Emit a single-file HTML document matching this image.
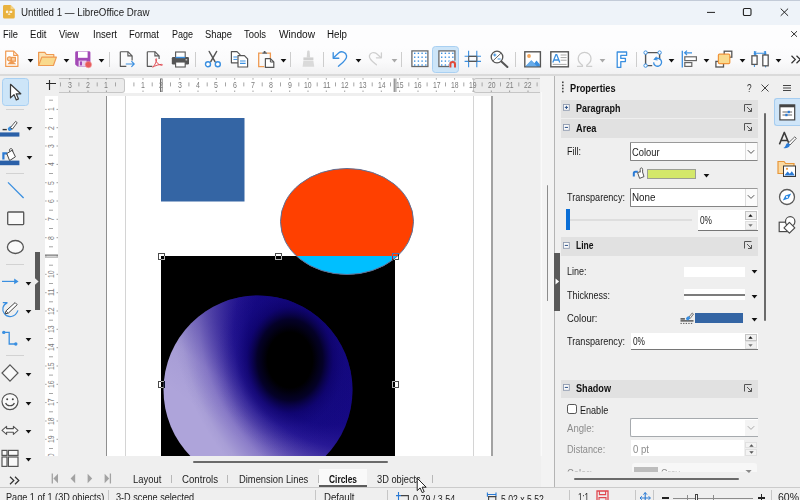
<!DOCTYPE html>
<html><head><meta charset="utf-8"><title>Untitled 1 - LibreOffice Draw</title>
<style>
html,body{margin:0;padding:0;}
body{width:800px;height:500px;overflow:hidden;position:relative;background:#efefef;font-family:"Liberation Sans",sans-serif;font-size:11px;color:#000;}
.b{position:absolute;display:block;}
.t{position:absolute;display:block;white-space:nowrap;line-height:normal;transform-origin:0 50%;}
</style></head><body>
<div class="b" style="left:0px;top:0px;width:800px;height:24.6px;background:#eef3f9;"></div>
<div class="b" style="left:0px;top:0px;width:800px;height:1px;background:#c3cbd8;"></div>
<svg class="b" style="left:3.2px;top:5.3px;" width="12" height="13.5" viewBox="0 0 12 13.5"><path d="M1.600 0h6l4.200 4.200v7.800a1.500 1.500 0 0 1-1.500 1.500h-8.800a1.500 1.500 0 0 1-1.500-1.500v-10.500a1.500 1.500 0 0 1 1.500-1.500z" fill="#e9b23e"/><path d="M7.600 0l4.200 4.200h-4.200z" fill="#f4d488"/><circle cx="4.100" cy="6.900" r="1.300" fill="#fdf3dc"/><rect x="6.500" y="5.800" width="2.700" height="2.200" rx="0.500" fill="#fdf3dc"/><path d="M4.600 9.200l1.500-.9 1.500.9-1.500.8z" fill="#fdf3dc"/></svg>
<span class="t" style="left:20.50px;top:7.00px;font-size:10px;color:#222;transform:scaleX(0.9726);">Untitled 1 — LibreOffice Draw</span>
<svg class="b" style="left:706px;top:6px;" width="12" height="12" viewBox="0 0 12 12"><path d="M1 6.400h8" stroke="#222" stroke-width="1" fill="none"/></svg>
<svg class="b" style="left:741px;top:6px;" width="12" height="12" viewBox="0 0 12 12"><rect x="2.400" y="2.500" width="7.600" height="7" rx="1.200" stroke="#222" stroke-width="1.100" fill="none"/></svg>
<svg class="b" style="left:777px;top:6px;" width="12" height="12" viewBox="0 0 12 12"><path d="M3.700 2.600l7.400 7.200M11.100 2.600L3.700 9.800" stroke="#222" stroke-width="1" fill="none"/></svg>
<div class="b" style="left:0px;top:24.6px;width:800px;height:21.4px;background:#fdfdfe;"></div>
<span class="t" style="left:3.00px;top:29.00px;font-size:10px;color:#111;transform:scaleX(0.9307);">File</span>
<span class="t" style="left:30.00px;top:29.00px;font-size:10px;color:#111;transform:scaleX(0.9574);">Edit</span>
<span class="t" style="left:59.00px;top:29.00px;font-size:10px;color:#111;transform:scaleX(0.9303);">View</span>
<span class="t" style="left:92.50px;top:29.00px;font-size:10px;color:#111;transform:scaleX(0.9595);">Insert</span>
<span class="t" style="left:129.00px;top:29.00px;font-size:10px;color:#111;transform:scaleX(0.9472);">Format</span>
<span class="t" style="left:171.50px;top:29.00px;font-size:10px;color:#111;transform:scaleX(0.8991);">Page</span>
<span class="t" style="left:204.50px;top:29.00px;font-size:10px;color:#111;transform:scaleX(0.9336);">Shape</span>
<span class="t" style="left:243.50px;top:29.00px;font-size:10px;color:#111;transform:scaleX(0.9422);">Tools</span>
<span class="t" style="left:278.50px;top:29.00px;font-size:10px;color:#111;transform:scaleX(1.0120);">Window</span>
<span class="t" style="left:327.00px;top:29.00px;font-size:10px;color:#111;transform:scaleX(0.9723);">Help</span>
<svg class="b" style="left:790px;top:30px;" width="9" height="9" viewBox="0 0 9 9"><path d="M1.200 1.200l5.800 5.600M7 1.200L1.200 6.800" stroke="#333" stroke-width="1" fill="none"/></svg>
<div class="b" style="left:0px;top:46px;width:800px;height:28px;background:#fbfbfc;"></div>
<div class="b" style="left:0px;top:74px;width:800px;height:2px;background:#e2e2e2;"></div>
<div class="b" style="left:0px;top:76px;width:36px;height:424px;background:#efefef;"></div>
<div class="b" style="left:0px;top:489px;width:800px;height:11px;background:#efefef;"></div>
<div class="b" style="left:59px;top:92px;width:481px;height:364px;background:#efefef;"></div>
<div class="b" style="left:106px;top:96px;width:386px;height:360px;background:#fff;"></div>
<div class="b" style="left:106.2px;top:96px;width:1.2px;height:360px;background:#8f8f8f;"></div>
<div class="b" style="left:491px;top:96px;width:2px;height:360px;background:#a2a2a2;"></div>
<div class="b" style="left:124.5px;top:96px;width:1.3px;height:360px;background:#d4d4d4;"></div>
<div class="b" style="left:472.7px;top:96px;width:1.3px;height:360px;background:#d4d4d4;"></div>
<svg class="b" style="left:0px;top:0px;clip-path:inset(92px 260px 0 59px);" width="800" height="456" viewBox="0 0 800 456"><defs><radialGradient id="sphl" gradientUnits="userSpaceOnUse" cx="420" cy="300" r="250" fx="289" fy="360"><stop offset="0" stop-color="#14087e"/><stop offset="0.34" stop-color="#170a86"/><stop offset="0.46" stop-color="#2a1a98"/><stop offset="0.61" stop-color="#5a4ab0"/><stop offset="0.76" stop-color="#8a7cc8"/><stop offset="0.93" stop-color="#a89ed6"/><stop offset="1" stop-color="#aea4da"/></radialGradient><linearGradient id="spht" gradientUnits="userSpaceOnUse" x1="185" y1="400" x2="262" y2="300"><stop offset="0" stop-color="#14087e" stop-opacity="0"/><stop offset="0.3" stop-color="#14087e" stop-opacity="0.05"/><stop offset="0.65" stop-color="#14087e" stop-opacity="0.3"/><stop offset="1" stop-color="#14087e" stop-opacity="0.45"/></linearGradient><radialGradient id="sphr" gradientUnits="userSpaceOnUse" cx="0" cy="0" r="88" gradientTransform="translate(290 360) scale(0.850 1.050)"><stop offset="0" stop-color="#000" stop-opacity="1"/><stop offset="0.3" stop-color="#000" stop-opacity="1"/><stop offset="0.44" stop-color="#02001c" stop-opacity="0.88"/><stop offset="0.58" stop-color="#0a0060" stop-opacity="0.52"/><stop offset="0.74" stop-color="#100878" stop-opacity="0.2"/><stop offset="0.9" stop-color="#100878" stop-opacity="0.04"/><stop offset="1" stop-color="#100878" stop-opacity="0"/></radialGradient><clipPath id="el"><ellipse cx="347" cy="221.5" rx="66.5" ry="53"/></clipPath></defs><rect x="108" y="96" width="383" height="360" fill="#fff"/><rect x="125" y="96" width="1" height="360" fill="#d4d4d4"/><rect x="473" y="96" width="1" height="360" fill="#d4d4d4"/><rect x="161" y="118" width="83.5" height="83.5" fill="#3465a4"/><rect x="161" y="256" width="234" height="210" fill="#000"/><ellipse cx="347" cy="221.5" rx="66.5" ry="53" fill="#ff4000"/><rect x="270" y="256" width="150" height="30" fill="#00bfff" clip-path="url(#el)"/><ellipse cx="347" cy="221.5" rx="66.5" ry="53" fill="none" stroke="#5d6f96" stroke-width="1"/><circle cx="258" cy="390" r="94.5" fill="url(#sphl)"/><circle cx="258" cy="390" r="94.5" fill="url(#spht)"/><circle cx="258" cy="390" r="94.5" fill="url(#sphr)"/><rect x="158.5" y="253.5" width="6" height="6" fill="none" stroke="#b4b4b4" stroke-width="1" style="mix-blend-mode:difference"/><rect x="275.5" y="253.5" width="6" height="6" fill="none" stroke="#b4b4b4" stroke-width="1" style="mix-blend-mode:difference"/><rect x="392.5" y="253.5" width="6" height="6" fill="none" stroke="#b4b4b4" stroke-width="1" style="mix-blend-mode:difference"/><rect x="158.5" y="381.5" width="6" height="6" fill="none" stroke="#b4b4b4" stroke-width="1" style="mix-blend-mode:difference"/><rect x="392.5" y="381.5" width="6" height="6" fill="none" stroke="#b4b4b4" stroke-width="1" style="mix-blend-mode:difference"/></svg>
<div class="b" style="left:36px;top:76px;width:519px;height:16px;background:#efefef;"></div>
<div class="b" style="left:59px;top:78px;width:481px;height:14.5px;background:#fff;"></div>
<div class="b" style="left:59px;top:78px;width:66px;height:14.5px;background:#ebebeb;border:1px solid #c6c6c6;border-left:none;border-radius:0 3px 3px 0;box-sizing:border-box;"></div>
<div class="b" style="left:473px;top:78px;width:67px;height:14.5px;background:#ebebeb;border:1px solid #c6c6c6;border-right:none;border-radius:3px 0 0 3px;box-sizing:border-box;"></div>
<svg class="b" style="left:0px;top:0px;" width="800" height="95" viewBox="0 0 800 95"><rect x="60.0" y="82.4" width="1" height="4" fill="#a6a6a6"/><rect x="69.2" y="78.3" width="1" height="1.2" fill="#8a8a8a"/><rect x="69.2" y="90.6" width="1" height="1.2" fill="#8a8a8a"/><rect x="78.4" y="82.4" width="1" height="4" fill="#a6a6a6"/><rect x="87.5" y="78.3" width="1" height="1.2" fill="#8a8a8a"/><rect x="87.5" y="90.6" width="1" height="1.2" fill="#8a8a8a"/><rect x="96.7" y="82.4" width="1" height="4" fill="#a6a6a6"/><rect x="105.9" y="78.3" width="1" height="1.2" fill="#8a8a8a"/><rect x="105.9" y="90.6" width="1" height="1.2" fill="#8a8a8a"/><rect x="115.0" y="82.4" width="1" height="4" fill="#a6a6a6"/><rect x="133.4" y="82.4" width="1" height="4" fill="#a6a6a6"/><rect x="142.5" y="78.3" width="1" height="1.2" fill="#8a8a8a"/><rect x="142.5" y="90.6" width="1" height="1.2" fill="#8a8a8a"/><rect x="151.7" y="82.4" width="1" height="4" fill="#a6a6a6"/><rect x="160.9" y="78.3" width="1" height="1.2" fill="#8a8a8a"/><rect x="160.9" y="90.6" width="1" height="1.2" fill="#8a8a8a"/><rect x="170.0" y="82.4" width="1" height="4" fill="#a6a6a6"/><rect x="179.2" y="78.3" width="1" height="1.2" fill="#8a8a8a"/><rect x="179.2" y="90.6" width="1" height="1.2" fill="#8a8a8a"/><rect x="188.4" y="82.4" width="1" height="4" fill="#a6a6a6"/><rect x="197.5" y="78.3" width="1" height="1.2" fill="#8a8a8a"/><rect x="197.5" y="90.6" width="1" height="1.2" fill="#8a8a8a"/><rect x="206.7" y="82.4" width="1" height="4" fill="#a6a6a6"/><rect x="215.8" y="78.3" width="1" height="1.2" fill="#8a8a8a"/><rect x="215.8" y="90.6" width="1" height="1.2" fill="#8a8a8a"/><rect x="225.0" y="82.4" width="1" height="4" fill="#a6a6a6"/><rect x="234.2" y="78.3" width="1" height="1.2" fill="#8a8a8a"/><rect x="234.2" y="90.6" width="1" height="1.2" fill="#8a8a8a"/><rect x="243.3" y="82.4" width="1" height="4" fill="#a6a6a6"/><rect x="252.5" y="78.3" width="1" height="1.2" fill="#8a8a8a"/><rect x="252.5" y="90.6" width="1" height="1.2" fill="#8a8a8a"/><rect x="261.7" y="82.4" width="1" height="4" fill="#a6a6a6"/><rect x="270.8" y="78.3" width="1" height="1.2" fill="#8a8a8a"/><rect x="270.8" y="90.6" width="1" height="1.2" fill="#8a8a8a"/><rect x="280.0" y="82.4" width="1" height="4" fill="#a6a6a6"/><rect x="289.2" y="78.3" width="1" height="1.2" fill="#8a8a8a"/><rect x="289.2" y="90.6" width="1" height="1.2" fill="#8a8a8a"/><rect x="298.3" y="82.4" width="1" height="4" fill="#a6a6a6"/><rect x="307.5" y="78.3" width="1" height="1.2" fill="#8a8a8a"/><rect x="307.5" y="90.6" width="1" height="1.2" fill="#8a8a8a"/><rect x="316.7" y="82.4" width="1" height="4" fill="#a6a6a6"/><rect x="325.8" y="78.3" width="1" height="1.2" fill="#8a8a8a"/><rect x="325.8" y="90.6" width="1" height="1.2" fill="#8a8a8a"/><rect x="335.0" y="82.4" width="1" height="4" fill="#a6a6a6"/><rect x="344.2" y="78.3" width="1" height="1.2" fill="#8a8a8a"/><rect x="344.2" y="90.6" width="1" height="1.2" fill="#8a8a8a"/><rect x="353.3" y="82.4" width="1" height="4" fill="#a6a6a6"/><rect x="362.5" y="78.3" width="1" height="1.2" fill="#8a8a8a"/><rect x="362.5" y="90.6" width="1" height="1.2" fill="#8a8a8a"/><rect x="371.7" y="82.4" width="1" height="4" fill="#a6a6a6"/><rect x="380.8" y="78.3" width="1" height="1.2" fill="#8a8a8a"/><rect x="380.8" y="90.6" width="1" height="1.2" fill="#8a8a8a"/><rect x="390.0" y="82.4" width="1" height="4" fill="#a6a6a6"/><rect x="399.1" y="78.3" width="1" height="1.2" fill="#8a8a8a"/><rect x="399.1" y="90.6" width="1" height="1.2" fill="#8a8a8a"/><rect x="408.3" y="82.4" width="1" height="4" fill="#a6a6a6"/><rect x="417.5" y="78.3" width="1" height="1.2" fill="#8a8a8a"/><rect x="417.5" y="90.6" width="1" height="1.2" fill="#8a8a8a"/><rect x="426.6" y="82.4" width="1" height="4" fill="#a6a6a6"/><rect x="435.8" y="78.3" width="1" height="1.2" fill="#8a8a8a"/><rect x="435.8" y="90.6" width="1" height="1.2" fill="#8a8a8a"/><rect x="445.0" y="82.4" width="1" height="4" fill="#a6a6a6"/><rect x="454.1" y="78.3" width="1" height="1.2" fill="#8a8a8a"/><rect x="454.1" y="90.6" width="1" height="1.2" fill="#8a8a8a"/><rect x="463.3" y="82.4" width="1" height="4" fill="#a6a6a6"/><rect x="472.5" y="78.3" width="1" height="1.2" fill="#8a8a8a"/><rect x="472.5" y="90.6" width="1" height="1.2" fill="#8a8a8a"/><rect x="481.6" y="82.4" width="1" height="4" fill="#a6a6a6"/><rect x="490.8" y="78.3" width="1" height="1.2" fill="#8a8a8a"/><rect x="490.8" y="90.6" width="1" height="1.2" fill="#8a8a8a"/><rect x="500.0" y="82.4" width="1" height="4" fill="#a6a6a6"/><rect x="509.1" y="78.3" width="1" height="1.2" fill="#8a8a8a"/><rect x="509.1" y="90.6" width="1" height="1.2" fill="#8a8a8a"/><rect x="518.3" y="82.4" width="1" height="4" fill="#a6a6a6"/><rect x="527.5" y="78.3" width="1" height="1.2" fill="#8a8a8a"/><rect x="527.5" y="90.6" width="1" height="1.2" fill="#8a8a8a"/><rect x="536.6" y="82.4" width="1" height="4" fill="#a6a6a6"/><rect x="160.0" y="78.500" width="1" height="13.500" fill="#6e6e6e"/><rect x="161.7" y="78.500" width="1" height="13.500" fill="#8a8a8a"/><rect x="393.7" y="78.500" width="1" height="13.500" fill="#6e6e6e"/><rect x="395.4" y="78.500" width="1" height="13.500" fill="#8a8a8a"/></svg>
<span class="t" style="left:67.76px;top:80.00px;font-size:9px;color:#7c7c7c;transform:scaleX(0.7791);">3</span>
<span class="t" style="left:86.09px;top:80.00px;font-size:9px;color:#7c7c7c;transform:scaleX(0.7791);">2</span>
<span class="t" style="left:104.42px;top:80.00px;font-size:9px;color:#7c7c7c;transform:scaleX(0.7791);">1</span>
<span class="t" style="left:141.08px;top:80.00px;font-size:9px;color:#7c7c7c;transform:scaleX(0.7791);">1</span>
<span class="t" style="left:159.41px;top:80.00px;font-size:9px;color:#7c7c7c;transform:scaleX(0.7791);">2</span>
<span class="t" style="left:177.74px;top:80.00px;font-size:9px;color:#7c7c7c;transform:scaleX(0.7791);">3</span>
<span class="t" style="left:196.07px;top:80.00px;font-size:9px;color:#7c7c7c;transform:scaleX(0.7791);">4</span>
<span class="t" style="left:214.40px;top:80.00px;font-size:9px;color:#7c7c7c;transform:scaleX(0.7791);">5</span>
<span class="t" style="left:232.73px;top:80.00px;font-size:9px;color:#7c7c7c;transform:scaleX(0.7791);">6</span>
<span class="t" style="left:251.06px;top:80.00px;font-size:9px;color:#7c7c7c;transform:scaleX(0.7791);">7</span>
<span class="t" style="left:269.39px;top:80.00px;font-size:9px;color:#7c7c7c;transform:scaleX(0.7791);">8</span>
<span class="t" style="left:287.72px;top:80.00px;font-size:9px;color:#7c7c7c;transform:scaleX(0.7791);">9</span>
<span class="t" style="left:304.20px;top:80.00px;font-size:9px;color:#7c7c7c;transform:scaleX(0.7591);">10</span>
<span class="t" style="left:322.53px;top:80.00px;font-size:9px;color:#7c7c7c;transform:scaleX(0.8134);">11</span>
<span class="t" style="left:340.86px;top:80.00px;font-size:9px;color:#7c7c7c;transform:scaleX(0.7591);">12</span>
<span class="t" style="left:359.19px;top:80.00px;font-size:9px;color:#7c7c7c;transform:scaleX(0.7591);">13</span>
<span class="t" style="left:377.52px;top:80.00px;font-size:9px;color:#7c7c7c;transform:scaleX(0.7591);">14</span>
<span class="t" style="left:395.85px;top:80.00px;font-size:9px;color:#7c7c7c;transform:scaleX(0.7591);">15</span>
<span class="t" style="left:414.18px;top:80.00px;font-size:9px;color:#7c7c7c;transform:scaleX(0.7591);">16</span>
<span class="t" style="left:432.51px;top:80.00px;font-size:9px;color:#7c7c7c;transform:scaleX(0.7591);">17</span>
<span class="t" style="left:450.84px;top:80.00px;font-size:9px;color:#7c7c7c;transform:scaleX(0.7591);">18</span>
<span class="t" style="left:469.17px;top:80.00px;font-size:9px;color:#7c7c7c;transform:scaleX(0.7591);">19</span>
<span class="t" style="left:487.50px;top:80.00px;font-size:9px;color:#7c7c7c;transform:scaleX(0.7591);">20</span>
<span class="t" style="left:505.83px;top:80.00px;font-size:9px;color:#7c7c7c;transform:scaleX(0.7591);">21</span>
<span class="t" style="left:524.16px;top:80.00px;font-size:9px;color:#7c7c7c;transform:scaleX(0.7591);">22</span>
<svg class="b" style="left:44px;top:78px;" width="14" height="14" viewBox="0 0 14 14"><path d="M5.500 2v10M2 5.500h10" stroke="#2a2a2a" stroke-width="1.150" fill="none"/></svg>
<div class="b" style="left:45px;top:96px;width:13px;height:360px;background:#fff;"></div>
<svg class="b" style="left:0px;top:0px;" width="60" height="456" viewBox="0 0 60 456"><rect x="49" y="99.7" width="4" height="1" fill="#a6a6a6"/><rect x="45.3" y="108.9" width="1.2" height="1" fill="#8a8a8a"/><rect x="56.600" y="108.9" width="1.200" height="1" fill="#8a8a8a"/><rect x="49" y="118.0" width="4" height="1" fill="#a6a6a6"/><rect x="45.3" y="127.2" width="1.2" height="1" fill="#8a8a8a"/><rect x="56.600" y="127.2" width="1.200" height="1" fill="#8a8a8a"/><rect x="49" y="136.4" width="4" height="1" fill="#a6a6a6"/><rect x="45.3" y="145.5" width="1.2" height="1" fill="#8a8a8a"/><rect x="56.600" y="145.5" width="1.200" height="1" fill="#8a8a8a"/><rect x="49" y="154.7" width="4" height="1" fill="#a6a6a6"/><rect x="45.3" y="163.9" width="1.2" height="1" fill="#8a8a8a"/><rect x="56.600" y="163.9" width="1.200" height="1" fill="#8a8a8a"/><rect x="49" y="173.0" width="4" height="1" fill="#a6a6a6"/><rect x="45.3" y="182.2" width="1.2" height="1" fill="#8a8a8a"/><rect x="56.600" y="182.2" width="1.200" height="1" fill="#8a8a8a"/><rect x="49" y="191.3" width="4" height="1" fill="#a6a6a6"/><rect x="45.3" y="200.5" width="1.2" height="1" fill="#8a8a8a"/><rect x="56.600" y="200.5" width="1.200" height="1" fill="#8a8a8a"/><rect x="49" y="209.7" width="4" height="1" fill="#a6a6a6"/><rect x="45.3" y="218.8" width="1.2" height="1" fill="#8a8a8a"/><rect x="56.600" y="218.8" width="1.200" height="1" fill="#8a8a8a"/><rect x="49" y="228.0" width="4" height="1" fill="#a6a6a6"/><rect x="45.3" y="237.2" width="1.2" height="1" fill="#8a8a8a"/><rect x="56.600" y="237.2" width="1.200" height="1" fill="#8a8a8a"/><rect x="49" y="246.3" width="4" height="1" fill="#a6a6a6"/><rect x="45.3" y="255.5" width="1.2" height="1" fill="#8a8a8a"/><rect x="56.600" y="255.5" width="1.200" height="1" fill="#8a8a8a"/><rect x="49" y="264.7" width="4" height="1" fill="#a6a6a6"/><rect x="45.3" y="273.8" width="1.2" height="1" fill="#8a8a8a"/><rect x="56.600" y="273.8" width="1.200" height="1" fill="#8a8a8a"/><rect x="49" y="283.0" width="4" height="1" fill="#a6a6a6"/><rect x="45.3" y="292.2" width="1.2" height="1" fill="#8a8a8a"/><rect x="56.600" y="292.2" width="1.200" height="1" fill="#8a8a8a"/><rect x="49" y="301.3" width="4" height="1" fill="#a6a6a6"/><rect x="45.3" y="310.5" width="1.2" height="1" fill="#8a8a8a"/><rect x="56.600" y="310.5" width="1.200" height="1" fill="#8a8a8a"/><rect x="49" y="319.7" width="4" height="1" fill="#a6a6a6"/><rect x="45.3" y="328.8" width="1.2" height="1" fill="#8a8a8a"/><rect x="56.600" y="328.8" width="1.200" height="1" fill="#8a8a8a"/><rect x="49" y="338.0" width="4" height="1" fill="#a6a6a6"/><rect x="45.3" y="347.2" width="1.2" height="1" fill="#8a8a8a"/><rect x="56.600" y="347.2" width="1.200" height="1" fill="#8a8a8a"/><rect x="49" y="356.3" width="4" height="1" fill="#a6a6a6"/><rect x="45.3" y="365.5" width="1.2" height="1" fill="#8a8a8a"/><rect x="56.600" y="365.5" width="1.200" height="1" fill="#8a8a8a"/><rect x="49" y="374.6" width="4" height="1" fill="#a6a6a6"/><rect x="45.3" y="383.8" width="1.2" height="1" fill="#8a8a8a"/><rect x="56.600" y="383.8" width="1.200" height="1" fill="#8a8a8a"/><rect x="49" y="393.0" width="4" height="1" fill="#a6a6a6"/><rect x="45.3" y="402.1" width="1.2" height="1" fill="#8a8a8a"/><rect x="56.600" y="402.1" width="1.200" height="1" fill="#8a8a8a"/><rect x="49" y="411.3" width="4" height="1" fill="#a6a6a6"/><rect x="45.3" y="420.5" width="1.2" height="1" fill="#8a8a8a"/><rect x="56.600" y="420.5" width="1.200" height="1" fill="#8a8a8a"/><rect x="49" y="429.6" width="4" height="1" fill="#a6a6a6"/><rect x="45.3" y="438.8" width="1.2" height="1" fill="#8a8a8a"/><rect x="56.600" y="438.8" width="1.200" height="1" fill="#8a8a8a"/><rect x="49" y="448.0" width="4" height="1" fill="#a6a6a6"/><rect x="45" y="254.6" width="13" height="1" fill="#555"/><rect x="45" y="256.6" width="13" height="1" fill="#999"/></svg>
<span class="t" style="left:45.50px;top:111.26px;font-size:9px;color:#7c7c7c;transform-origin:0 0;transform:rotate(-90deg) scaleX(0.759);">1</span>
<span class="t" style="left:45.50px;top:129.59px;font-size:9px;color:#7c7c7c;transform-origin:0 0;transform:rotate(-90deg) scaleX(0.759);">2</span>
<span class="t" style="left:45.50px;top:147.92px;font-size:9px;color:#7c7c7c;transform-origin:0 0;transform:rotate(-90deg) scaleX(0.759);">3</span>
<span class="t" style="left:45.50px;top:166.25px;font-size:9px;color:#7c7c7c;transform-origin:0 0;transform:rotate(-90deg) scaleX(0.759);">4</span>
<span class="t" style="left:45.50px;top:184.58px;font-size:9px;color:#7c7c7c;transform-origin:0 0;transform:rotate(-90deg) scaleX(0.759);">5</span>
<span class="t" style="left:45.50px;top:202.91px;font-size:9px;color:#7c7c7c;transform-origin:0 0;transform:rotate(-90deg) scaleX(0.759);">6</span>
<span class="t" style="left:45.50px;top:221.24px;font-size:9px;color:#7c7c7c;transform-origin:0 0;transform:rotate(-90deg) scaleX(0.759);">7</span>
<span class="t" style="left:45.50px;top:239.57px;font-size:9px;color:#7c7c7c;transform-origin:0 0;transform:rotate(-90deg) scaleX(0.759);">8</span>
<span class="t" style="left:45.50px;top:278.13px;font-size:9px;color:#7c7c7c;transform-origin:0 0;transform:rotate(-90deg) scaleX(0.759);">10</span>
<span class="t" style="left:45.50px;top:296.46px;font-size:9px;color:#7c7c7c;transform-origin:0 0;transform:rotate(-90deg) scaleX(0.813);">11</span>
<span class="t" style="left:45.50px;top:314.79px;font-size:9px;color:#7c7c7c;transform-origin:0 0;transform:rotate(-90deg) scaleX(0.759);">12</span>
<span class="t" style="left:45.50px;top:333.12px;font-size:9px;color:#7c7c7c;transform-origin:0 0;transform:rotate(-90deg) scaleX(0.759);">13</span>
<span class="t" style="left:45.50px;top:351.45px;font-size:9px;color:#7c7c7c;transform-origin:0 0;transform:rotate(-90deg) scaleX(0.759);">14</span>
<span class="t" style="left:45.50px;top:369.78px;font-size:9px;color:#7c7c7c;transform-origin:0 0;transform:rotate(-90deg) scaleX(0.759);">15</span>
<span class="t" style="left:45.50px;top:388.11px;font-size:9px;color:#7c7c7c;transform-origin:0 0;transform:rotate(-90deg) scaleX(0.759);">16</span>
<span class="t" style="left:45.50px;top:406.44px;font-size:9px;color:#7c7c7c;transform-origin:0 0;transform:rotate(-90deg) scaleX(0.759);">17</span>
<span class="t" style="left:45.50px;top:424.77px;font-size:9px;color:#7c7c7c;transform-origin:0 0;transform:rotate(-90deg) scaleX(0.759);">18</span>
<span class="t" style="left:45.50px;top:443.10px;font-size:9px;color:#7c7c7c;transform-origin:0 0;transform:rotate(-90deg) scaleX(0.759);">19</span>
<span class="t" style="left:45.50px;top:461.43px;font-size:9px;color:#7c7c7c;transform-origin:0 0;transform:rotate(-90deg) scaleX(0.759);">20</span>
<div class="b" style="left:540px;top:76px;width:15px;height:412px;background:#f3f3f3;"></div>
<div class="b" style="left:540.5px;top:92px;width:1px;height:364px;background:#fafafa;"></div>
<div class="b" style="left:546.6px;top:185px;width:1.8px;height:115.5px;background:#8c8c8c;border-radius:1px;"></div>
<div class="b" style="left:554.3px;top:76px;width:1.2px;height:412px;background:#b4b4b4;"></div>
<div class="b" style="left:556px;top:76px;width:244px;height:412px;background:#efefef;"></div>
<svg class="b" style="left:561px;top:81px;" width="4" height="12" viewBox="0 0 4 12"><g fill="#444"><rect x="1" y="0.5" width="1.6" height="1.6"/><rect x="1" y="3.6" width="1.6" height="1.6"/><rect x="1" y="6.7" width="1.6" height="1.6"/><rect x="1" y="9.8" width="1.6" height="1.6"/></g></svg>
<span class="t" style="left:569.70px;top:83.00px;font-size:10px;font-weight:bold;color:#111;transform:scaleX(0.9197);">Properties</span>
<span class="t" style="left:746.90px;top:83.00px;font-size:10px;color:#333;transform:scaleX(0.8270);">?</span>
<svg class="b" style="left:760px;top:83px;" width="10" height="10" viewBox="0 0 10 10"><path d="M1.5 1.5l7 7M8.5 1.5l-7 7" stroke="#444" stroke-width="1" fill="none"/></svg>
<svg class="b" style="left:782px;top:83px;" width="10" height="10" viewBox="0 0 10 10"><path d="M1 2.5h8M1 5h8M1 7.5h8" stroke="#444" stroke-width="1" fill="none"/></svg>
<div class="b" style="left:561px;top:99.5px;width:197px;height:18.5px;background:#e1e1e1;"></div>
<svg class="b" style="left:563.2px;top:104.1px;" width="7" height="7" viewBox="0 0 7 7"><rect x="0.5" y="0.5" width="5.800" height="5.800" fill="#fbfbfb" stroke="#8f9bb0" stroke-width="0.900"/><path d="M1.800 3.400h3.200" stroke="#2a4f86" stroke-width="1"/><path d="M3.400 1.800v3.200" stroke="#2a4f86" stroke-width="1"/></svg>
<span class="t" style="left:575.60px;top:103.00px;font-size:10px;font-weight:bold;color:#111;transform:scaleX(0.8995);">Paragraph</span>
<svg class="b" style="left:744px;top:103.5px;" width="9" height="9" viewBox="0 0 9 9"><path d="M0.5 7.5v-7h7" stroke="#555" stroke-width="1" fill="none"/><path d="M3 3l4.5 4.5M7.5 4v3.5h-3.5" stroke="#555" stroke-width="1" fill="none"/></svg>
<div class="b" style="left:561px;top:119.3px;width:197px;height:18.5px;background:#e1e1e1;"></div>
<svg class="b" style="left:563.2px;top:123.9px;" width="7" height="7" viewBox="0 0 7 7"><rect x="0.5" y="0.5" width="5.800" height="5.800" fill="#fbfbfb" stroke="#8f9bb0" stroke-width="0.900"/><path d="M1.800 3.400h3.200" stroke="#2a4f86" stroke-width="1"/></svg>
<span class="t" style="left:575.60px;top:123.00px;font-size:10px;font-weight:bold;color:#111;transform:scaleX(0.9218);">Area</span>
<svg class="b" style="left:744px;top:123.3px;" width="9" height="9" viewBox="0 0 9 9"><path d="M0.5 7.5v-7h7" stroke="#555" stroke-width="1" fill="none"/><path d="M3 3l4.5 4.5M7.5 4v3.5h-3.5" stroke="#555" stroke-width="1" fill="none"/></svg>
<div class="b" style="left:561px;top:237px;width:197px;height:18.5px;background:#e1e1e1;"></div>
<svg class="b" style="left:563.2px;top:241.6px;" width="7" height="7" viewBox="0 0 7 7"><rect x="0.5" y="0.5" width="5.800" height="5.800" fill="#fbfbfb" stroke="#8f9bb0" stroke-width="0.900"/><path d="M1.800 3.400h3.200" stroke="#2a4f86" stroke-width="1"/></svg>
<span class="t" style="left:575.60px;top:240.00px;font-size:10px;font-weight:bold;color:#111;transform:scaleX(0.8511);">Line</span>
<svg class="b" style="left:744px;top:241px;" width="9" height="9" viewBox="0 0 9 9"><path d="M0.5 7.5v-7h7" stroke="#555" stroke-width="1" fill="none"/><path d="M3 3l4.5 4.5M7.5 4v3.5h-3.5" stroke="#555" stroke-width="1" fill="none"/></svg>
<div class="b" style="left:561px;top:379.7px;width:197px;height:18.5px;background:#e1e1e1;"></div>
<svg class="b" style="left:563.2px;top:384.3px;" width="7" height="7" viewBox="0 0 7 7"><rect x="0.5" y="0.5" width="5.800" height="5.800" fill="#fbfbfb" stroke="#8f9bb0" stroke-width="0.900"/><path d="M1.800 3.400h3.200" stroke="#2a4f86" stroke-width="1"/></svg>
<span class="t" style="left:575.60px;top:383.00px;font-size:10px;font-weight:bold;color:#111;transform:scaleX(0.9129);">Shadow</span>
<svg class="b" style="left:744px;top:383.7px;" width="9" height="9" viewBox="0 0 9 9"><path d="M0.5 7.5v-7h7" stroke="#555" stroke-width="1" fill="none"/><path d="M3 3l4.5 4.5M7.5 4v3.5h-3.5" stroke="#555" stroke-width="1" fill="none"/></svg>
<span class="t" style="left:566.50px;top:146.00px;font-size:10px;color:#1a1a1a;transform:scaleX(0.8999);">Fill:</span>
<div class="b" style="left:630px;top:142.2px;width:128px;height:18.8px;background:#fff;box-sizing:border-box;border-top:1px solid #9a9a9a;border-left:1px solid #7c7c7c;border-bottom:1px solid #858585;border-right:1px solid #d4d4d4;border-radius:1px;"></div>
<div class="b" style="left:744.7px;top:143.2px;width:12.3px;height:16.8px;background:#fbfbfb;box-sizing:border-box;border-left:1px solid #dcdcdc;"></div>
<svg class="b" style="left:747.2px;top:148.6px;" width="8" height="6" viewBox="0 0 8 6"><path d="M0.800 1.200l3.200 3.200 3.200-3.200" stroke="#555" stroke-width="1" fill="none"/></svg>
<span class="t" style="left:632.20px;top:147.00px;font-size:10px;color:#1a1a1a;transform:scaleX(0.9368);">Colour</span>
<svg class="b" style="left:631.5px;top:167px;" width="13" height="12" viewBox="0 0 13 12"><path d="M1.800 9.600V6.400c0-1 .6-1.600 1.600-1.600h2.400" stroke="#2a7ad4" stroke-width="2" fill="none"/><path d="M5.600 5.600l4.600-1.600 1.800 5.600-4.400 1.800z" fill="#fff" stroke="#444" stroke-width="0.900" stroke-linejoin="round"/><path d="M8.200 5.400V2.400c0-2 2.400-2 2.400 0v2.400" stroke="#444" stroke-width="0.900" fill="#fff"/></svg>
<div class="b" style="left:647.2px;top:169.3px;width:48.5px;height:9.6px;background:#d4e86a;box-sizing:border-box;border:1px solid #9c9f94;"></div>
<svg class="b" style="left:702.8px;top:174.2px;" width="7" height="4.5" viewBox="0 0 7 4.5"><path d="M0.650 0h5.700l-2.850 3.400z" fill="#111"/></svg>
<span class="t" style="left:566.50px;top:192.00px;font-size:10px;color:#1a1a1a;transform:scaleX(0.9126);">Transparency:</span>
<div class="b" style="left:630px;top:188px;width:128px;height:18.8px;background:#fff;box-sizing:border-box;border-top:1px solid #9a9a9a;border-left:1px solid #7c7c7c;border-bottom:1px solid #858585;border-right:1px solid #d4d4d4;border-radius:1px;"></div>
<div class="b" style="left:744.7px;top:189px;width:12.3px;height:16.8px;background:#fbfbfb;box-sizing:border-box;border-left:1px solid #dcdcdc;"></div>
<svg class="b" style="left:747.2px;top:194.4px;" width="8" height="6" viewBox="0 0 8 6"><path d="M0.800 1.200l3.200 3.200 3.200-3.200" stroke="#555" stroke-width="1" fill="none"/></svg>
<span class="t" style="left:632.20px;top:192.00px;font-size:10px;color:#1a1a1a;transform:scaleX(0.9828);">None</span>
<div class="b" style="left:570px;top:219.3px;width:122px;height:2px;background:#dedede;"></div>
<div class="b" style="left:566px;top:208.5px;width:4.3px;height:21.3px;background:#0b6fd6;"></div>
<div class="b" style="left:697.8px;top:210px;width:59.8px;height:21.4px;background:#fff;box-sizing:border-box;border-bottom:1px solid #767676;"></div>
<div class="b" style="left:745px;top:210.8px;width:11.8px;height:9.5px;background:#f0f0f0;box-sizing:border-box;border:1px solid #c4c4c4;"></div>
<div class="b" style="left:745px;top:220.7px;width:11.8px;height:9.5px;background:#f0f0f0;box-sizing:border-box;border:1px solid #e0e0e0;"></div>
<svg class="b" style="left:748.4px;top:214.15px;" width="5" height="3" viewBox="0 0 5 3"><path d="M0.300 2.800l2.200-2.600 2.200 2.600z" fill="#111"/></svg>
<svg class="b" style="left:748.4px;top:224.05px;" width="5" height="3" viewBox="0 0 5 3"><path d="M0.300 0.200l2.200 2.600 2.200-2.600z" fill="#777"/></svg>
<span class="t" style="left:700.20px;top:215.00px;font-size:10px;color:#1a1a1a;transform:scaleX(0.8302);">0%</span>
<span class="t" style="left:566.50px;top:266.00px;font-size:10px;color:#1a1a1a;transform:scaleX(0.8991);">Line:</span>
<div class="b" style="left:684.4px;top:266.5px;width:60.4px;height:10.6px;background:#fff;"></div>
<svg class="b" style="left:750.5px;top:270.2px;" width="7" height="4.5" viewBox="0 0 7 4.5"><path d="M0.650 0h5.700l-2.850 3.400z" fill="#111"/></svg>
<span class="t" style="left:566.50px;top:290.00px;font-size:10px;color:#1a1a1a;transform:scaleX(0.8996);">Thickness:</span>
<div class="b" style="left:684.4px;top:289px;width:60.4px;height:11.4px;background:#fff;"></div>
<div class="b" style="left:684.4px;top:294.4px;width:60.4px;height:1.2px;background:#7c7c7c;"></div>
<svg class="b" style="left:750.5px;top:294.6px;" width="7" height="4.5" viewBox="0 0 7 4.5"><path d="M0.650 0h5.700l-2.850 3.400z" fill="#111"/></svg>
<span class="t" style="left:566.50px;top:313.00px;font-size:10px;color:#1a1a1a;transform:scaleX(0.9460);">Colour:</span>
<svg class="b" style="left:679.5px;top:312px;" width="15" height="12" viewBox="0 0 15 12"><path d="M0.500 6.900h4.400" stroke="#444" stroke-width="1.400"/><path d="M0.500 8.900h13" stroke="#333" stroke-width="1.200"/><path d="M0.500 11.400h13" stroke="#555" stroke-width="1" stroke-dasharray="1.300 1.300"/><path d="M8.600 5.600l3.600-4.600 1.300 1-3.500 4.700z" fill="#f4f4f4" stroke="#555" stroke-width="0.800"/><ellipse cx="8" cy="6.300" rx="2.100" ry="1.700" transform="rotate(-35 8 6.300)" fill="#3a8fe0"/></svg>
<div class="b" style="left:695px;top:313.3px;width:48px;height:9.6px;background:#3465a4;"></div>
<svg class="b" style="left:750.5px;top:318.2px;" width="7" height="4.5" viewBox="0 0 7 4.5"><path d="M0.650 0h5.700l-2.850 3.400z" fill="#111"/></svg>
<span class="t" style="left:566.50px;top:336.00px;font-size:10px;color:#1a1a1a;transform:scaleX(0.9126);">Transparency:</span>
<div class="b" style="left:630.6px;top:333px;width:127px;height:16.8px;background:#fff;box-sizing:border-box;border-bottom:1px solid #767676;"></div>
<div class="b" style="left:745px;top:333.8px;width:11.8px;height:7.2px;background:#f0f0f0;box-sizing:border-box;border:1px solid #c4c4c4;"></div>
<div class="b" style="left:745px;top:341.4px;width:11.8px;height:7.2px;background:#f0f0f0;box-sizing:border-box;border:1px solid #e0e0e0;"></div>
<svg class="b" style="left:748.4px;top:336px;" width="5" height="3" viewBox="0 0 5 3"><path d="M0.300 2.800l2.200-2.600 2.200 2.600z" fill="#111"/></svg>
<svg class="b" style="left:748.4px;top:343.6px;" width="5" height="3" viewBox="0 0 5 3"><path d="M0.300 0.200l2.200 2.600 2.200-2.600z" fill="#777"/></svg>
<span class="t" style="left:633.00px;top:336.00px;font-size:10px;color:#1a1a1a;transform:scaleX(0.8302);">0%</span>
<div class="b" style="left:566.5px;top:404.4px;width:10px;height:10px;background:#fff;box-sizing:border-box;border:1px solid #555;border-radius:2.2px;"></div>
<span class="t" style="left:580.30px;top:405.00px;font-size:10px;color:#1a1a1a;transform:scaleX(0.9055);">Enable</span>
<span class="t" style="left:566.50px;top:423.00px;font-size:10px;color:#8c8c8c;transform:scaleX(0.9591);">Angle:</span>
<div class="b" style="left:630.3px;top:418.4px;width:127.6px;height:18.8px;background:#fff;box-sizing:border-box;border:1.500px solid #a6aaae;border-right:none;border-radius:2px 0 0 2px;"></div>
<div class="b" style="left:744.5px;top:419.9px;width:13.4px;height:15.8px;background:#f4f4f4;"></div>
<svg class="b" style="left:746.8px;top:425px;" width="8" height="6" viewBox="0 0 8 6"><path d="M0.800 1.200l3.200 3.200 3.200-3.200" stroke="#a8a8a8" stroke-width="1" fill="none"/></svg>
<span class="t" style="left:566.50px;top:444.00px;font-size:10px;color:#8c8c8c;transform:scaleX(0.9163);">Distance:</span>
<div class="b" style="left:631.2px;top:440.4px;width:113px;height:16.1px;background:#fff;"></div>
<span class="t" style="left:633.00px;top:444.00px;font-size:10px;color:#8c8c8c;transform:scaleX(0.9590);">0 pt</span>
<div class="b" style="left:745.3px;top:441.9px;width:11.4px;height:6.6px;background:#f3f3f3;box-sizing:border-box;border:1px solid #e0e0e0;"></div>
<div class="b" style="left:745.3px;top:449px;width:11.4px;height:6.6px;background:#f3f3f3;box-sizing:border-box;border:1px solid #e0e0e0;"></div>
<svg class="b" style="left:748.5px;top:443.8px;" width="5" height="3" viewBox="0 0 5 3"><path d="M0.300 2.800l2.200-2.600 2.200 2.600z" fill="#555"/></svg>
<svg class="b" style="left:748.5px;top:450.9px;" width="5" height="3" viewBox="0 0 5 3"><path d="M0.300 0.200l2.200 2.600 2.200-2.600z" fill="#555"/></svg>
<span class="t" style="left:566.50px;top:468.00px;font-size:10px;color:#8c8c8c;transform:scaleX(0.9370);clip-path:inset(0 0 7.500px 0);">Color:</span>
<div class="b" style="left:632.2px;top:462.5px;width:124.5px;height:9.5px;background:#f7f7f7;border-radius:3px 3px 0 0;"></div>
<div class="b" style="left:633.5px;top:466.7px;width:24px;height:5.3px;background:#bdbdbd;"></div>
<span class="t" style="left:661.00px;top:468.00px;font-size:10px;color:#8c8c8c;transform:scaleX(0.8767);clip-path:inset(0 0 7.500px 0);">Grey</span>
<svg class="b" style="left:744.5px;top:469.5px;" width="7" height="3" viewBox="0 0 7 3"><path d="M0.400 0h6.200l-2.600 3z" fill="#8a8a8a"/></svg>
<div class="b" style="left:574.4px;top:478.3px;width:164.6px;height:1.8px;background:#6a6a6a;border-radius:1px;"></div>
<div class="b" style="left:764.4px;top:113px;width:1.9px;height:208px;background:#6a6a6a;border-radius:1px;"></div>
<div class="b" style="left:554px;top:252.5px;width:6px;height:58px;background:#595959;"></div>
<svg class="b" style="left:555px;top:278px;" width="5" height="7" viewBox="0 0 5 7"><path d="M0.5 0.5l3.6 3-3.6 3z" fill="#fff"/></svg>
<div class="b" style="left:773.5px;top:98px;width:27px;height:27.5px;background:#cfe5f8;box-sizing:border-box;border:1px solid #a6cdf0;border-radius:3px 0 0 3px;border-right:none;"></div>
<svg class="b" style="left:778.5px;top:103.5px;" width="17" height="17" viewBox="0 0 17 17"><rect x="0.900" y="0.900" width="14.800" height="15" fill="#fff" stroke="#444" stroke-width="1.200"/><rect x="0.900" y="0.900" width="14.800" height="2.400" fill="#444"/><path d="M3.500 8h9.600M3.500 11h9.600" stroke="#555" stroke-width="0.900"/><rect x="8.700" y="6.800" width="2.200" height="2.400" fill="#2a7ad4"/><rect x="6.300" y="9.800" width="2.200" height="2.400" fill="#2a7ad4"/></svg>
<svg class="b" style="left:777px;top:130px;" width="22" height="20" viewBox="0 0 22 20"><path d="M2.400 14.400L7.300 2.400L12.300 14.400M4.100 10.400h6.500" stroke="#3a3a3a" stroke-width="1.500" fill="none" stroke-linejoin="round"/><path d="M11.200 13.200l6.600-6.400 1.500 1.500-6.300 6.700z" fill="#fff" stroke="#555" stroke-width="0.900"/><path d="M6.400 18c2.600.6 5.600-.2 6.400-2.400.6-1.800-1.400-3.200-3-2-1.200 1-.8 3.400-3.400 4.400z" fill="#2a7ad4"/></svg>
<svg class="b" style="left:777px;top:158px;" width="20" height="20" viewBox="0 0 20 20"><path d="M1 3.5h6l1.6 2H17v10H1z" fill="#fbd9a0" stroke="#e8973a" stroke-width="1.2"/><rect x="6.5" y="8" width="12" height="10.5" fill="#fff" stroke="#3a3a3a" stroke-width="1"/><path d="M7.3 17.5l3.3-4 2.2 2.3 2-2.6 3 4.3z" fill="#2a7ad4"/><circle cx="10" cy="10.8" r="1.1" fill="#e8973a"/></svg>
<svg class="b" style="left:778px;top:187.6px;" width="18" height="18" viewBox="0 0 18 18"><circle cx="9" cy="9" r="7.500" fill="#fff" stroke="#5a5a5a" stroke-width="1.300"/><path d="M13.200 5.400L10.600 10.600 4.800 12.600 7.400 7.400z" fill="#2a86e0"/><circle cx="9" cy="9" r="1.100" fill="#fff"/></svg>
<svg class="b" style="left:777px;top:215px;" width="21" height="20" viewBox="0 0 21 20"><rect x="2.200" y="7.200" width="7.800" height="9.400" fill="#fff" stroke="#4a4a4a" stroke-width="1.200"/><circle cx="13.200" cy="6.400" r="4.700" fill="#fff" stroke="#4a4a4a" stroke-width="1.200"/><path d="M12.400 7.400l5.400 5.400-5.400 5.400-5.400-5.400z" fill="#fff" stroke="#4a4a4a" stroke-width="1.200" stroke-linejoin="round"/></svg>
<div class="b" style="left:0px;top:46px;width:800px;height:28px;background:linear-gradient(#fdfdfe 0%,#fafafb 55%,#f1f1f2 100%);"></div>
<div class="b" style="left:0px;top:73.6px;width:800px;height:2.2px;background:#dadada;"></div>
<svg class="b" style="left:4px;top:50px;" width="16" height="18" viewBox="0 0 16 18"><path d="M1.7 1.2h8l4.2 4.2v11H1.7z" fill="#fff" stroke="#ef9a52" stroke-width="1.2" stroke-linejoin="round"/><path d="M9.7 1.2v4.2h4.2" fill="none" stroke="#ef9a52" stroke-width="1.1"/><circle cx="5.400" cy="8.800" r="2" fill="#f8cfa4" stroke="#ef9a52" stroke-width="1.200"/><rect x="7.400" y="7.400" width="4" height="3.800" fill="#f8cfa4" stroke="#ef9a52" stroke-width="1.200"/><path d="M3.800 14l3.800-3.600 4 3.600z" fill="#ef9a52" stroke="#ef9a52" stroke-width="0.600"/></svg>
<svg class="b" style="left:26.8px;top:59px;" width="7" height="4.5" viewBox="0 0 7 4.5"><path d="M0.650 0h5.700l-2.850 3.400z" fill="#111"/></svg>
<svg class="b" style="left:37px;top:50px;" width="21" height="18" viewBox="0 0 21 18"><path d="M1.6 15.5V2.3h6.2l1.6 2.2h7.4v2.6" fill="#fbe3b4" stroke="#ef9a52" stroke-width="1.2" stroke-linejoin="round"/><path d="M1.6 15.5l3.2-8.4h14.6l-3 8.4z" fill="#f9d98c" stroke="#ef9a52" stroke-width="1.2" stroke-linejoin="round"/></svg>
<svg class="b" style="left:62.5px;top:59px;" width="7" height="4.5" viewBox="0 0 7 4.5"><path d="M0.650 0h5.700l-2.850 3.400z" fill="#111"/></svg>
<svg class="b" style="left:74px;top:50px;" width="19" height="19" viewBox="0 0 19 19"><path d="M1.2 2.6a1.4 1.4 0 0 1 1.4-1.4h12.4a1.4 1.4 0 0 1 1.4 1.4v12.6a1.4 1.4 0 0 1-1.4 1.4H3.4L1.2 14.6z" fill="#a349b6"/><rect x="4" y="1.6" width="9.6" height="6.2" fill="#fff"/><rect x="4.6" y="10.6" width="8" height="5.6" fill="#e8d0ee"/><rect x="6" y="11.4" width="2" height="4" fill="#a349b6"/><circle cx="14.4" cy="14.6" r="3.2" fill="#e85a5a" stroke="#f4a0a0" stroke-width="0.6"/></svg>
<svg class="b" style="left:97.9px;top:59px;" width="7" height="4.5" viewBox="0 0 7 4.5"><path d="M0.650 0h5.700l-2.850 3.400z" fill="#111"/></svg>
<div class="b" style="left:108.9px;top:52px;width:1px;height:14.5px;background:#cdcdcd;"></div>
<svg class="b" style="left:119px;top:50px;" width="17" height="18" viewBox="0 0 17 18"><path d="M1.3 1.7h7.6l4.2 4.2v4.5M1.3 1.7v14.6h6" fill="none" stroke="#555555" stroke-width="1.150" stroke-linejoin="round"/><path d="M8.9 1.7v4.2h4.2" fill="none" stroke="#555555" stroke-width="1.1"/><path d="M6.800 14h8.200M12.400 11.200l2.800 2.800-2.800 2.800" fill="none" stroke="#3a8fe0" stroke-width="1.150"/></svg>
<svg class="b" style="left:145.5px;top:50px;" width="18" height="19" viewBox="0 0 18 19"><path d="M1.3 1.7h7.6l4.2 4.2v3M1.3 1.7v14.6h5" fill="none" stroke="#555555" stroke-width="1.150" stroke-linejoin="round"/><path d="M8.9 1.7v4.2h4.2" fill="none" stroke="#555555" stroke-width="1.1"/><path d="M6.6 17.2c1.8-1.4 3.6-4.6 4-7.6.2-1.4-1-1.4-.9 0 .3 2.600 2.400 5.200 5.900 5.700 1.200.2 1.200-.9 0-.9-2.800 0-6.300 1.200-9 2.800z" fill="none" stroke="#e0484f" stroke-width="0.950" stroke-linejoin="round"/></svg>
<svg class="b" style="left:171px;top:51px;" width="19" height="17" viewBox="0 0 19 17"><rect x="4.6" y="1" width="9.6" height="6" fill="#fff" stroke="#555555" stroke-width="1.1"/><rect x="0.8" y="6" width="17.200" height="7.6" rx="1.3" fill="#555555"/><rect x="4.600" y="5.800" width="9.600" height="1.400" fill="#3a8fe0"/><rect x="4.6" y="11" width="9.6" height="5" fill="#fff" stroke="#555555" stroke-width="1.1"/><rect x="14.6" y="8.2" width="1.6" height="1.2" fill="#ddd"/></svg>
<div class="b" style="left:195.1px;top:52px;width:1px;height:14.5px;background:#cdcdcd;"></div>
<svg class="b" style="left:204px;top:50px;" width="18" height="18" viewBox="0 0 18 18"><path d="M5.200 1.500l5.800 10.200M12.600 1.500L6.800 11.700" stroke="#555555" stroke-width="1.5" fill="none" stroke-linecap="round"/><circle cx="4" cy="14.3" r="2.500" fill="#fff" stroke="#3a8fe0" stroke-width="1.400"/><circle cx="13.800" cy="14.300" r="2.500" fill="#fff" stroke="#3a8fe0" stroke-width="1.400"/></svg>
<svg class="b" style="left:230px;top:50px;" width="20" height="19" viewBox="0 0 20 19"><path d="M1.400 1.600h5.600l3 3v8.200H1.400z" fill="#fff" stroke="#555555" stroke-width="1.200" stroke-linejoin="round"/><path d="M3.400 7h4M3.400 9.400h4" stroke="#3a8fe0" stroke-width="1"/><path d="M8 5.600h6.400l3.200 3.200v8.200H8z" fill="#fff" stroke="#555555" stroke-width="1.200" stroke-linejoin="round"/><path d="M10 11h5.600M10 13.400h5.600" stroke="#3a8fe0" stroke-width="1.1"/></svg>
<svg class="b" style="left:257px;top:50px;" width="19" height="19" viewBox="0 0 19 19"><path d="M5 3.200H1.700v13.400h5.600M10 3.200h3.400v5" fill="none" stroke="#ef9a52" stroke-width="1.300"/><path d="M5.200 3.800V2.400h1.300c0-1.800 2.200-1.800 2.200 0H10v1.400z" fill="#555555"/><path d="M8.400 8.600h5l3.400 3.400v5.400H8.400z" fill="#fff" stroke="#555555" stroke-width="1.200" stroke-linejoin="round"/><path d="M13.400 8.600v3.400h3.400" fill="none" stroke="#555555" stroke-width="1"/></svg>
<svg class="b" style="left:279.7px;top:59px;" width="7" height="4.5" viewBox="0 0 7 4.5"><path d="M0.650 0h5.700l-2.850 3.400z" fill="#111"/></svg>
<div class="b" style="left:290.3px;top:52px;width:1px;height:14.5px;background:#cdcdcd;"></div>
<svg class="b" style="left:300.5px;top:50px;" width="15" height="18" viewBox="0 0 15 18"><path d="M6.200 1.200c0-1 2.400-1 2.400 0l.5 6.200H5.700z" fill="#d6d6d6"/><rect x="2.400" y="7.400" width="10" height="2.600" fill="#cfcfcf"/><path d="M2.400 10.600h10l.8 6.200H1.600z" fill="#dadada"/></svg>
<div class="b" style="left:323.4px;top:52px;width:1px;height:14.5px;background:#cdcdcd;"></div>
<svg class="b" style="left:330.5px;top:50px;" width="19" height="18" viewBox="0 0 19 18"><path d="M7.400 16.200c4.200-3.400 8.800-6.800 8.200-10.400C15 2 10.400.6 7.600 3L2.800 7.400" fill="none" stroke="#3a8fe0" stroke-width="1.350" stroke-linecap="round"/><path d="M2.200 2.600v5.600h5.600" fill="none" stroke="#3a8fe0" stroke-width="1.350" stroke-linecap="round" stroke-linejoin="round"/></svg>
<svg class="b" style="left:355px;top:59px;" width="7" height="4.5" viewBox="0 0 7 4.5"><path d="M0.650 0h5.700l-2.850 3.400z" fill="#111"/></svg>
<svg class="b" style="left:367.5px;top:51px;" width="17" height="16" viewBox="0 0 17 16"><path d="M8.400 13.800C4.800 10.800.800 8 1.400 4.800 2 1.600 6 .6 8.400 2.600l4.400 3.800" fill="none" stroke="#cfcfcf" stroke-width="1.300" stroke-linecap="round"/><path d="M13.400 1.800v5h-5" fill="none" stroke="#cfcfcf" stroke-width="1.300" stroke-linecap="round" stroke-linejoin="round"/></svg>
<svg class="b" style="left:390.5px;top:59px;" width="7" height="4.5" viewBox="0 0 7 4.5"><path d="M0.650 0h5.700l-2.850 3.400z" fill="#a8a8a8"/></svg>
<div class="b" style="left:401.1px;top:52px;width:1px;height:14.5px;background:#cdcdcd;"></div>
<svg class="b" style="left:410.8px;top:50px;" width="18" height="18" viewBox="0 0 18 18"><rect x="0.900" y="0.900" width="16" height="15.600" fill="#fff" stroke="#686868" stroke-width="1.300"/><rect x="3.0" y="2.6" width="1.400" height="1.400" fill="#3a8fe0"/><rect x="6.7" y="2.6" width="1.400" height="1.400" fill="#3a8fe0"/><rect x="10.4" y="2.6" width="1.400" height="1.400" fill="#3a8fe0"/><rect x="14.1" y="2.6" width="1.400" height="1.400" fill="#3a8fe0"/><rect x="3.0" y="6.5" width="1.400" height="1.400" fill="#3a8fe0"/><rect x="6.7" y="6.5" width="1.400" height="1.400" fill="#3a8fe0"/><rect x="10.4" y="6.5" width="1.400" height="1.400" fill="#3a8fe0"/><rect x="14.1" y="6.5" width="1.400" height="1.400" fill="#3a8fe0"/><rect x="3.0" y="10.4" width="1.400" height="1.400" fill="#3a8fe0"/><rect x="6.7" y="10.4" width="1.400" height="1.400" fill="#3a8fe0"/><rect x="10.4" y="10.4" width="1.400" height="1.400" fill="#3a8fe0"/><rect x="14.1" y="10.4" width="1.400" height="1.400" fill="#3a8fe0"/><rect x="3.0" y="14.3" width="1.400" height="1.400" fill="#3a8fe0"/><rect x="6.7" y="14.3" width="1.400" height="1.400" fill="#3a8fe0"/><rect x="10.4" y="14.3" width="1.400" height="1.400" fill="#3a8fe0"/><rect x="14.1" y="14.3" width="1.400" height="1.400" fill="#3a8fe0"/></svg>
<div class="b" style="left:431.9px;top:46px;width:27px;height:27px;background:#cde5f8;box-sizing:border-box;border:1px solid #a9d0f2;border-radius:3.500px;"></div>
<svg class="b" style="left:437.6px;top:50px;" width="19" height="18" viewBox="0 0 19 18"><rect x="0.900" y="0.900" width="16" height="15.600" fill="#fff" stroke="#686868" stroke-width="1.300"/><rect x="3.0" y="2.6" width="1.400" height="1.400" fill="#3a8fe0"/><rect x="6.7" y="2.6" width="1.400" height="1.400" fill="#3a8fe0"/><rect x="10.4" y="2.6" width="1.400" height="1.400" fill="#3a8fe0"/><rect x="14.1" y="2.6" width="1.400" height="1.400" fill="#3a8fe0"/><rect x="3.0" y="6.5" width="1.400" height="1.400" fill="#3a8fe0"/><rect x="6.7" y="6.5" width="1.400" height="1.400" fill="#3a8fe0"/><rect x="10.4" y="6.5" width="1.400" height="1.400" fill="#3a8fe0"/><rect x="14.1" y="6.5" width="1.400" height="1.400" fill="#3a8fe0"/><rect x="3.0" y="10.4" width="1.400" height="1.400" fill="#3a8fe0"/><rect x="6.7" y="10.4" width="1.400" height="1.400" fill="#3a8fe0"/><rect x="10.4" y="10.4" width="1.400" height="1.400" fill="#3a8fe0"/><rect x="14.1" y="10.4" width="1.400" height="1.400" fill="#3a8fe0"/><rect x="3.0" y="14.3" width="1.400" height="1.400" fill="#3a8fe0"/><rect x="6.7" y="14.3" width="1.400" height="1.400" fill="#3a8fe0"/><rect x="10.4" y="14.3" width="1.400" height="1.400" fill="#3a8fe0"/><rect x="14.1" y="14.3" width="1.400" height="1.400" fill="#3a8fe0"/><rect x="11" y="10.600" width="8" height="8" fill="#cde5f8"/><path d="M12.400 17.400v-3.200a2.300 2.300 0 0 1 4.600 0v3.200" fill="none" stroke="#e04a3a" stroke-width="2"/></svg>
<svg class="b" style="left:463.8px;top:50px;" width="18" height="18" viewBox="0 0 18 18"><path d="M4.600 0.800v16.400M12.800 0.800v16.400M0.600 6.300h16.400M0.600 11.400h16.400" stroke="#3a8fe0" stroke-width="1.100" fill="none"/><path d="M4.600 6.300h8.200M4.600 11.400h8.200" stroke="#555" stroke-width="1.300" fill="none"/><path d="M4.600 6.300v5.100M12.800 6.300v5.100" stroke="#666" stroke-width="1.100" fill="none"/></svg>
<svg class="b" style="left:490px;top:50px;" width="19" height="18" viewBox="0 0 19 18"><circle cx="7" cy="7" r="5.800" fill="#fff" stroke="#555555" stroke-width="1.300"/><path d="M11.400 11.400l6 5.600" stroke="#555555" stroke-width="2" stroke-linecap="round"/><path d="M3 10.800L11 3.200" stroke="#555555" stroke-width="0.9"/><path d="M3.200 5h3.200M4.800 3.400v3.200M7.600 9h3" stroke="#3a8fe0" stroke-width="1.100"/></svg>
<div class="b" style="left:514.5px;top:52px;width:1px;height:14.5px;background:#cdcdcd;"></div>
<svg class="b" style="left:523.5px;top:50.5px;" width="18" height="17" viewBox="0 0 18 17"><rect x="0.800" y="0.800" width="15.600" height="15" fill="#fff" stroke="#555555" stroke-width="1.400"/><path d="M1.500 15.200l5.800-6 3 3 2.200-2.600 3.400 3.800v1.800z" fill="#3a8fe0"/><path d="M1.500 15.200l5.800-6 5.600 6z" fill="#7ab6ec" opacity="0.7"/><circle cx="5" cy="5" r="1.900" fill="#f3a55a"/></svg>
<svg class="b" style="left:549.6px;top:50.5px;" width="20" height="17" viewBox="0 0 20 17"><rect x="0.800" y="0.800" width="17.600" height="15" fill="#fff" stroke="#555555" stroke-width="1.400"/><path d="M2.800 11.600L5.900 3.600h.8l3.100 8M3.900 9h4.800" fill="none" stroke="#3a8fe0" stroke-width="1.300"/><path d="M10.600 4h6M10.600 6.600h6M10.600 9.200h6M2.800 13.400h13.800" stroke="#a8a8a8" stroke-width="1"/></svg>
<svg class="b" style="left:575.5px;top:51px;" width="18" height="17" viewBox="0 0 18 17"><path d="M1 15.400h5.400v-1.200C3.600 12.400 2.200 10.400 2.200 7.600 2.200 4 5 1.400 8.600 1.400S15 4 15 7.600c0 2.800-1.400 4.800-4.200 6.600v1.200h5.400" fill="none" stroke="#cdcdcd" stroke-width="1.300"/></svg>
<svg class="b" style="left:599.2px;top:59px;" width="7" height="4.5" viewBox="0 0 7 4.5"><path d="M0.650 0h5.700l-2.850 3.400z" fill="#a8a8a8"/></svg>
<svg class="b" style="left:615.5px;top:50.5px;" width="12" height="18" viewBox="0 0 12 18"><path d="M1.200 1h9.400v3.400H4.800v3h4.600v3.200H4.800v5.800H1.200z" fill="#fff" stroke="#3a8fe0" stroke-width="1.300" stroke-linejoin="round"/></svg>
<div class="b" style="left:636.4px;top:52px;width:1px;height:14.5px;background:#cdcdcd;"></div>
<svg class="b" style="left:643px;top:50px;" width="21" height="18" viewBox="0 0 21 18"><path d="M2.600 2.600h14v7M2.600 2.600v13h6.600" fill="none" stroke="#555" stroke-width="1.400"/><circle cx="2.600" cy="2.600" r="1.700" fill="#fff" stroke="#3a8fe0" stroke-width="1"/><circle cx="16.600" cy="2.600" r="1.700" fill="#fff" stroke="#3a8fe0" stroke-width="1"/><circle cx="2.600" cy="15.600" r="1.700" fill="#fff" stroke="#3a8fe0" stroke-width="1"/><path d="M12 9.200a4 4 0 1 1-1.400 3.200" fill="none" stroke="#3a8fe0" stroke-width="1.300"/><path d="M13.600 6.800l-2.200 2.600 3.200.6" fill="none" stroke="#3a8fe0" stroke-width="1.200"/></svg>
<svg class="b" style="left:668px;top:59px;" width="7" height="4.5" viewBox="0 0 7 4.5"><path d="M0.650 0h5.700l-2.850 3.400z" fill="#111"/></svg>
<svg class="b" style="left:680.5px;top:50px;" width="18" height="18" viewBox="0 0 18 18"><path d="M1.300 0.800v16.600" stroke="#3a8fe0" stroke-width="1.300"/><path d="M3.400 2.800h7.600M6 0.600L3.600 2.800 6 5" fill="none" stroke="#3a8fe0" stroke-width="1.200"/><rect x="3.800" y="6.800" width="11.600" height="3.800" fill="#fff" stroke="#666" stroke-width="1.200"/><rect x="3.800" y="12.600" width="7" height="3.800" fill="#fff" stroke="#666" stroke-width="1.200"/></svg>
<svg class="b" style="left:703.3px;top:59px;" width="7" height="4.5" viewBox="0 0 7 4.5"><path d="M0.650 0h5.700l-2.850 3.400z" fill="#111"/></svg>
<svg class="b" style="left:715px;top:50px;" width="19" height="18" viewBox="0 0 19 18"><rect x="9.200" y="1.200" width="7.600" height="6" fill="#fff" stroke="#555" stroke-width="1.300"/><rect x="0.900" y="11.400" width="7.600" height="5.600" fill="#fff" stroke="#555" stroke-width="1.300"/><rect x="3.400" y="4.200" width="11.400" height="9.400" rx="1" fill="#f9da8e" stroke="#f0943a" stroke-width="1.200"/></svg>
<svg class="b" style="left:739px;top:59px;" width="7" height="4.5" viewBox="0 0 7 4.5"><path d="M0.650 0h5.700l-2.850 3.400z" fill="#111"/></svg>
<svg class="b" style="left:750.5px;top:50px;" width="19" height="18" viewBox="0 0 19 18"><path d="M3.600 3.200h11M5.200 1.400l-1.800 1.800 1.800 1.800M13 1.400l1.800 1.800L13 5" fill="none" stroke="#3a8fe0" stroke-width="1.100"/><path d="M3.400 1v4.400M14.600 1v4.400M3.400 14.400v2.600M14.600 15.800v1.600" stroke="#3a8fe0" stroke-width="1"/><rect x="0.900" y="5.800" width="5.200" height="8.600" fill="#fff" stroke="#555" stroke-width="1.300"/><rect x="11.800" y="5" width="5.400" height="10.800" fill="#fff" stroke="#555" stroke-width="1.300"/></svg>
<svg class="b" style="left:774.5px;top:59px;" width="7" height="4.5" viewBox="0 0 7 4.5"><path d="M0.650 0h5.700l-2.850 3.400z" fill="#111"/></svg>
<svg class="b" style="left:790px;top:54.5px;" width="10" height="9" viewBox="0 0 10 9"><path d="M1.500 0.800l3.800 3.700-3.800 3.700M6.500 0.800l3.800 3.700-3.800 3.700" fill="none" stroke="#333" stroke-width="1.200"/></svg>
<div class="b" style="left:0px;top:76px;width:45px;height:412px;background:#efefef;"></div>
<div class="b" style="left:2px;top:78.4px;width:26.5px;height:27.8px;background:#cde5f8;box-sizing:border-box;border:1px solid #a9d0f2;border-radius:3.5px;"></div>
<svg class="b" style="left:9px;top:83px;" width="13" height="19" viewBox="0 0 13 19"><path d="M1.500 1.300v13.600l3.500-3.300 2.300 5.300 2.200-1-2.300-5.100h4.600z" fill="#fff" stroke="#3a3a3a" stroke-width="1.200" stroke-linejoin="round"/></svg>
<div class="b" style="left:6px;top:109.1px;width:18px;height:1.2px;background:#d2d2d2;"></div>
<svg class="b" style="left:0px;top:118px;" width="20" height="19" viewBox="0 0 20 19"><path d="M2.600 11.600h4.200" stroke="#333" stroke-width="1.400"/><ellipse cx="10.200" cy="10.600" rx="2.600" ry="2.100" transform="rotate(-35 10.200 10.600)" fill="#3a8fe0"/><path d="M10.400 9.600l5.200-6.200 1.600 1.300-4.800 6.400z" fill="#fff" stroke="#444" stroke-width="0.900"/><rect x="0" y="14.400" width="19.400" height="4.200" fill="#2a60a8"/></svg>
<svg class="b" style="left:25.5px;top:127.4px;" width="7" height="4.5" viewBox="0 0 7 4.5"><path d="M0.650 0h5.700l-2.850 3.400z" fill="#111"/></svg>
<svg class="b" style="left:0px;top:146px;" width="20" height="20" viewBox="0 0 20 20"><path d="M3.400 13.600V7.400h4" stroke="#2a7ad4" stroke-width="2.200" fill="none"/><path d="M6.800 7.600l5.400-3.400 3.200 6.600-5.800 3.800z" fill="#fff" stroke="#444" stroke-width="1"/><path d="M9.600 5.600c-.6-2.200.4-3.200 1.600-3 1.200.2 1.700 1.400 1.400 3" stroke="#444" stroke-width="0.900" fill="none"/><rect x="0" y="14.600" width="19.400" height="4.600" fill="#2a60a8"/></svg>
<svg class="b" style="left:25.5px;top:155.6px;" width="7" height="4.5" viewBox="0 0 7 4.5"><path d="M0.650 0h5.700l-2.850 3.400z" fill="#111"/></svg>
<div class="b" style="left:6px;top:172.5px;width:18px;height:1.2px;background:#d2d2d2;"></div>
<svg class="b" style="left:6px;top:180px;" width="20" height="20" viewBox="0 0 20 20"><path d="M2 2.400L17.600 18" stroke="#3a8fe0" stroke-width="1.300"/></svg>
<svg class="b" style="left:6px;top:210px;" width="20" height="17" viewBox="0 0 20 17"><rect x="1.700" y="2" width="16" height="12.600" rx="0.800" fill="#f9f9f9" stroke="#555" stroke-width="1.300"/></svg>
<svg class="b" style="left:5px;top:238px;" width="21" height="18" viewBox="0 0 21 18"><ellipse cx="10.400" cy="9" rx="8" ry="6.500" fill="#f9f9f9" stroke="#555" stroke-width="1.300"/></svg>
<div class="b" style="left:6px;top:263.9px;width:18px;height:1.2px;background:#d2d2d2;"></div>
<svg class="b" style="left:0px;top:276px;" width="21" height="11" viewBox="0 0 21 11"><path d="M2 5.400h13" stroke="#3a8fe0" stroke-width="1.200"/><path d="M14.200 2.600l4.400 2.800-4.400 2.800z" fill="#3a8fe0"/></svg>
<svg class="b" style="left:25.2px;top:281.6px;" width="7" height="4.5" viewBox="0 0 7 4.5"><path d="M0.650 0h5.700l-2.850 3.400z" fill="#111"/></svg>
<svg class="b" style="left:0px;top:300px;" width="21" height="21" viewBox="0 0 21 21"><path d="M2.800 2.600h4.600C2.400 5 1.600 10 4.400 13.600c3.400 4.600 10.800 4.200 13.600-3.200" fill="none" stroke="#3a8fe0" stroke-width="1.200"/><path d="M5.200 13.800l.9-3 9-8.200 2.100 2.100-8.800 8.400z" fill="#fff" stroke="#444" stroke-width="1"/><path d="M6.300 11.200l1.800 1.800" stroke="#444" stroke-width="0.800"/></svg>
<svg class="b" style="left:25.2px;top:310.2px;" width="7" height="4.5" viewBox="0 0 7 4.5"><path d="M0.650 0h5.700l-2.850 3.400z" fill="#111"/></svg>
<svg class="b" style="left:0px;top:328px;" width="21" height="21" viewBox="0 0 21 21"><path d="M4 4.400h5.200v11.600h6.400" fill="none" stroke="#3a8fe0" stroke-width="1.300"/><circle cx="3.800" cy="4.400" r="1.700" fill="#3a8fe0"/><circle cx="15.800" cy="16" r="1.700" fill="#3a8fe0"/></svg>
<svg class="b" style="left:25.2px;top:338.2px;" width="7" height="4.5" viewBox="0 0 7 4.5"><path d="M0.650 0h5.700l-2.850 3.400z" fill="#111"/></svg>
<div class="b" style="left:6px;top:355.1px;width:18px;height:1.2px;background:#d2d2d2;"></div>
<svg class="b" style="left:0px;top:363px;" width="21" height="21" viewBox="0 0 21 21"><path d="M10 1.800l8 8.200-8 8.200-8-8.200z" fill="#f9f9f9" stroke="#555" stroke-width="1.200"/></svg>
<svg class="b" style="left:25.2px;top:373.2px;" width="7" height="4.5" viewBox="0 0 7 4.5"><path d="M0.650 0h5.700l-2.850 3.400z" fill="#111"/></svg>
<svg class="b" style="left:0px;top:392px;" width="21" height="20" viewBox="0 0 21 20"><circle cx="10" cy="9.600" r="8" fill="#f9f9f9" stroke="#555" stroke-width="1.200"/><circle cx="7.200" cy="7.200" r="1" fill="#444"/><circle cx="12.800" cy="7.200" r="1" fill="#444"/><path d="M5.600 11c1.200 3.600 7.600 3.600 8.800 0" fill="none" stroke="#444" stroke-width="1.100"/></svg>
<svg class="b" style="left:25.2px;top:401.6px;" width="7" height="4.5" viewBox="0 0 7 4.5"><path d="M0.650 0h5.700l-2.850 3.400z" fill="#111"/></svg>
<svg class="b" style="left:0px;top:423px;" width="21" height="15" viewBox="0 0 21 15"><path d="M2 7.400l4.600-4v2.200h6.800V3.400l4.600 4-4.600 4V9.200H6.600v2.200z" fill="#f9f9f9" stroke="#555" stroke-width="1.100" stroke-linejoin="round"/></svg>
<svg class="b" style="left:25.2px;top:429.8px;" width="7" height="4.5" viewBox="0 0 7 4.5"><path d="M0.650 0h5.700l-2.850 3.400z" fill="#111"/></svg>
<svg class="b" style="left:1px;top:449px;" width="19" height="19" viewBox="0 0 19 19"><rect x="1" y="1.400" width="5" height="5" fill="#f9f9f9" stroke="#555" stroke-width="1.200"/><rect x="7.400" y="1.400" width="9.600" height="5" fill="#f9f9f9" stroke="#555" stroke-width="1.200"/><rect x="1" y="8" width="5" height="9.400" fill="#f9f9f9" stroke="#555" stroke-width="1.200"/><rect x="7.400" y="8" width="9.600" height="9.400" fill="#f9f9f9" stroke="#555" stroke-width="1.200"/></svg>
<svg class="b" style="left:25.2px;top:458.4px;" width="7" height="4.5" viewBox="0 0 7 4.5"><path d="M0.650 0h5.700l-2.850 3.400z" fill="#111"/></svg>
<svg class="b" style="left:8.7px;top:476px;" width="11" height="9" viewBox="0 0 11 9"><path d="M1 0.800l3.800 3.700L1 8.200M6 0.800l3.800 3.700L6 8.200" fill="none" stroke="#333" stroke-width="1.200"/></svg>
<div class="b" style="left:35px;top:252px;width:5px;height:58px;background:#595959;"></div>
<svg class="b" style="left:35px;top:277.7px;" width="5" height="7" viewBox="0 0 5 7"><path d="M0 0.300v6.400l3.600-3.200z" fill="#efefef"/></svg>
<div class="b" style="left:36px;top:456px;width:505px;height:32px;background:#efefef;"></div>
<div class="b" style="left:193.2px;top:461px;width:195px;height:2px;background:#6a6a6a;border-radius:1px;"></div>
<svg class="b" style="left:51px;top:472.5px;" width="8" height="11" viewBox="0 0 8 11"><path d="M1.300 0.500v10" stroke="#a2a2a2" stroke-width="1.300"/><path d="M7 0.800v9.400L2.400 5.500z" fill="#a2a2a2"/></svg>
<svg class="b" style="left:70px;top:472.5px;" width="6" height="11" viewBox="0 0 6 11"><path d="M5.200 0.800v9.400L0.600 5.500z" fill="#a2a2a2"/></svg>
<svg class="b" style="left:87px;top:472.5px;" width="6" height="11" viewBox="0 0 6 11"><path d="M0.600 0.800v9.400l4.600-4.700z" fill="#a2a2a2"/></svg>
<svg class="b" style="left:104px;top:472.5px;" width="8" height="11" viewBox="0 0 8 11"><path d="M0.600 0.800v9.400l4.600-4.700z" fill="#a2a2a2"/><path d="M6.400 0.500v10" stroke="#a2a2a2" stroke-width="1.300"/></svg>
<span class="t" style="left:132.50px;top:474.00px;font-size:10px;color:#222;transform:scaleX(0.9424);">Layout</span>
<div class="b" style="left:170.9px;top:474.5px;width:1px;height:8.5px;background:#b8b8b8;"></div>
<span class="t" style="left:181.70px;top:474.00px;font-size:10px;color:#222;transform:scaleX(0.9666);">Controls</span>
<div class="b" style="left:226.7px;top:474.5px;width:1px;height:8.5px;background:#b8b8b8;"></div>
<span class="t" style="left:238.70px;top:474.00px;font-size:10px;color:#222;transform:scaleX(0.9373);">Dimension Lines</span>
<div class="b" style="left:317.7px;top:474.5px;width:1px;height:8.5px;background:#b8b8b8;"></div>
<div class="b" style="left:319.3px;top:469px;width:47.3px;height:17.6px;background:#f9f9f9;"></div>
<div class="b" style="left:319.3px;top:484.8px;width:47.3px;height:1.8px;background:#5c5c5c;"></div>
<span class="t" style="left:328.70px;top:474.00px;font-size:10px;font-weight:bold;color:#111;transform:scaleX(0.8393);">Circles</span>
<span class="t" style="left:377.00px;top:474.00px;font-size:10px;color:#222;transform:scaleX(0.9248);">3D objects</span>
<div class="b" style="left:431.8px;top:474.5px;width:1px;height:8.5px;background:#b8b8b8;"></div>
<div class="b" style="left:0px;top:487px;width:800px;height:13px;background:#efefef;"></div>
<div class="b" style="left:0px;top:487px;width:800px;height:1.3px;background:#cbcbcb;"></div>
<span class="t" style="left:5.50px;top:492.00px;font-size:10px;color:#222;transform:scaleX(0.9105);">Page 1 of 1 (3D objects)</span>
<div class="b" style="left:107.5px;top:490px;width:1px;height:10px;background:#c6c6c6;"></div>
<span class="t" style="left:116.30px;top:492.00px;font-size:10px;color:#222;transform:scaleX(0.9134);">3-D scene selected</span>
<div class="b" style="left:315.3px;top:490px;width:1px;height:10px;background:#c6c6c6;"></div>
<span class="t" style="left:323.80px;top:492.00px;font-size:10px;color:#222;transform:scaleX(0.9624);">Default</span>
<div class="b" style="left:387px;top:490px;width:1px;height:10px;background:#c6c6c6;"></div>
<svg class="b" style="left:395px;top:491px;" width="15" height="9" viewBox="0 0 15 9"><path d="M3.500 1v8M1 4.600h5" stroke="#2a7ad4" stroke-width="1.100"/><path d="M6 4.600h7.400v4.400" fill="none" stroke="#444" stroke-width="1.100"/></svg>
<span class="t" style="left:413.00px;top:494.00px;font-size:10px;color:#222;transform:scaleX(0.8927);">0.79 / 3.54</span>
<svg class="b" style="left:484px;top:491px;" width="14" height="9" viewBox="0 0 14 9"><path d="M3 3.500h9.400M3.400 1.400v4.400M12 1.400v4.400" stroke="#2a7ad4" stroke-width="1.100" fill="none"/><path d="M4.600 9V5.600h7.200V9" fill="none" stroke="#444" stroke-width="1.100"/></svg>
<span class="t" style="left:501.20px;top:494.00px;font-size:10px;color:#222;transform:scaleX(0.8648);">5.02 x 5.52</span>
<div class="b" style="left:568.9px;top:490px;width:1px;height:10px;background:#c6c6c6;"></div>
<span class="t" style="left:577.50px;top:492.00px;font-size:10px;color:#222;transform:scaleX(0.7911);">1:1</span>
<svg class="b" style="left:596px;top:490px;" width="14" height="10" viewBox="0 0 14 10"><path d="M1 10V1h11v9" fill="none" stroke="#e0484f" stroke-width="1.300"/><path d="M3.400 1v3.600h6.200V1M3 10V7.600h7V10" fill="none" stroke="#e0484f" stroke-width="1.100"/></svg>
<div class="b" style="left:634.5px;top:490px;width:1px;height:10px;background:#c6c6c6;"></div>
<svg class="b" style="left:638.5px;top:491.5px;" width="13" height="10" viewBox="0 0 13 10"><path d="M6.200 0.600v9.400M1.200 6h10" stroke="#2a7ad4" stroke-width="1.100"/><path d="M4.400 2.600L6.200.6 8 2.600M2.800 4.200L1 6l1.800 1.800M9.600 4.200L11.400 6 9.600 7.800" fill="none" stroke="#2a7ad4" stroke-width="1"/></svg>
<div class="b" style="left:653.3px;top:490px;width:1px;height:10px;background:#c6c6c6;"></div>
<div class="b" style="left:661.5px;top:497.3px;width:7.8px;height:1.5px;background:#222;"></div>
<div class="b" style="left:673.4px;top:497.6px;width:80px;height:1px;background:#8c8c8c;"></div>
<div class="b" style="left:712.5px;top:495px;width:1px;height:5px;background:#8c8c8c;"></div>
<div class="b" style="left:686.5px;top:495px;width:1px;height:5px;background:#8c8c8c;"></div>
<div class="b" style="left:694.5px;top:493.5px;width:3px;height:7px;background:#f4f4f4;box-sizing:border-box;border:1px solid #444;"></div>
<div class="b" style="left:757.5px;top:497.3px;width:7.8px;height:1.5px;background:#222;"></div>
<div class="b" style="left:760.7px;top:494px;width:1.5px;height:6px;background:#222;"></div>
<div class="b" style="left:770.5px;top:490px;width:1px;height:10px;background:#c6c6c6;"></div>
<span class="t" style="left:777.50px;top:492.00px;font-size:10px;color:#222;transform:scaleX(1.0491);">60%</span>
<svg class="b" style="left:416.2px;top:477.2px;" width="12" height="17" viewBox="0 0 12 17"><path d="M1.200 1.200v12.400l2.900-2.700 2.100 4.700 2-.9-2.100-4.500h4.100z" fill="#fff" stroke="#222" stroke-width="1" stroke-linejoin="round"/></svg>
</body></html>
